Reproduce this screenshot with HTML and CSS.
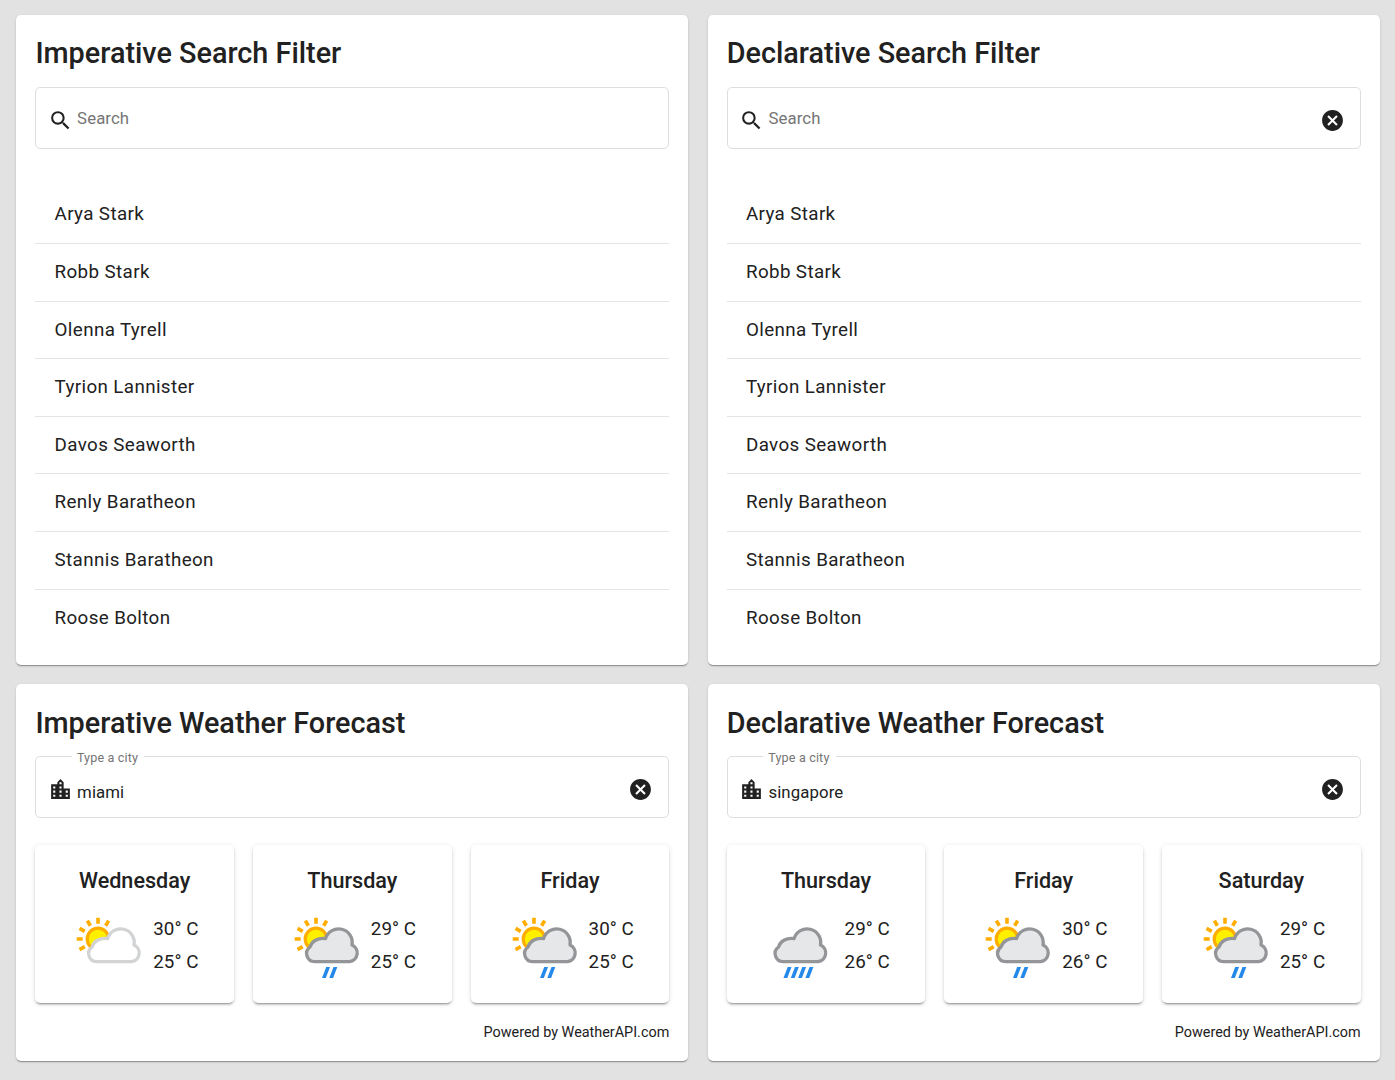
FILE: index.html
```html
<!DOCTYPE html>
<html lang="en">
<head>
<meta charset="utf-8">
<title>Search and Weather</title>
<link rel="stylesheet" href="styles.css">
</head>
<body>
<svg class="sprite" aria-hidden="true">
  <symbol id="search" viewBox="0 0 24 24"><path d="M15.5 14h-.79l-.28-.27A6.47 6.47 0 0 0 16 9.5 6.5 6.5 0 1 0 9.5 16c1.61 0 3.09-.59 4.23-1.57l.27.28v.79l5 4.99L20.49 19l-4.99-5zm-6 0C7.01 14 5 11.99 5 9.5S7.01 5 9.5 5 14 7.01 14 9.5 11.99 14 9.5 14z"/></symbol>
  <symbol id="cancel" viewBox="0 0 24 24"><path d="M12 2C6.47 2 2 6.47 2 12s4.47 10 10 10 10-4.47 10-10S17.53 2 12 2zm5 13.59L15.59 17 12 13.41 8.41 17 7 15.59 10.59 12 7 8.41 8.41 7 12 10.59 15.59 7 17 8.41 13.41 12 17 15.59z"/></symbol>
  <symbol id="city" viewBox="0 0 24 24"><path d="M15 11V5l-3-3-3 3v2H3v14h18V11h-6zm-8 8H5v-2h2v2zm0-4H5v-2h2v2zm0-4H5V9h2v2zm6 8h-2v-2h2v2zm0-4h-2v-2h2v2zm0-4h-2V9h2v2zm0-4h-2V5h2v2zm6 12h-2v-2h2v2zm0-4h-2v-2h2v2z"/></symbol>
  <symbol id="sun" viewBox="0 0 72 72">
    <circle cx="25" cy="30" r="10.8" fill="#fff000" stroke="#ffae00" stroke-width="3.2"/>
    <path d="M25 14.7V8.7M17.35 16.75l-3-5.2M11.75 22.35l-5.2-3M9.7 30h-6M11.75 37.65l-5.2 3M32.65 16.75l3-5.2" fill="none" stroke="#ffae00" stroke-width="3.6"/>
  </symbol>
  <symbol id="cloud" viewBox="0 0 72 72">
    <path d="M23.8 52.6a8 8 0 0 1-4.7-14.6C20.3 32.5 27 28.3 34.6 29.6A13.6 13.6 0 0 1 61 36A8.7 8.7 0 0 1 58.5 52.6Z" stroke-width="3.3" stroke-linejoin="round"/>
  </symbol>
  <symbol id="drop" viewBox="0 0 72 72"><path d="M35.2 58h3.8l-4.2 11H31z" fill="#2489e8"/></symbol>
  <symbol id="partly" viewBox="0 0 72 72"><use href="#sun"/><use href="#cloud" fill="#fff" stroke="#d1d3d4"/></symbol>
  <symbol id="showers" viewBox="0 0 72 72"><use href="#sun"/><use href="#cloud" fill="#e6e7e8" stroke="#939598"/><use href="#drop"/><use href="#drop" x="7.3"/></symbol>
  <symbol id="rain" viewBox="0 0 72 72"><use href="#cloud" x="-5.5" fill="#e6e7e8" stroke="#939598"/><use href="#drop" x="-12.5"/><use href="#drop" x="-5.2"/><use href="#drop" x="2.1"/><use href="#drop" x="9.4"/></symbol>
</svg>
<main class="board">
  <section class="card">
    <h1 class="title">Imperative Search Filter</h1>
    <div class="field"><svg class="icon"><use href="#search"/></svg><input class="input" placeholder="Search" aria-label="Search"></div>
    <ul class="list"><li>Arya Stark</li><li>Robb Stark</li><li>Olenna Tyrell</li><li>Tyrion Lannister</li><li>Davos Seaworth</li><li>Renly Baratheon</li><li>Stannis Baratheon</li><li>Roose Bolton</li></ul>
  </section>
  <section class="card">
    <h1 class="title">Declarative Search Filter</h1>
    <div class="field"><svg class="icon"><use href="#search"/></svg><input class="input" placeholder="Search" aria-label="Search"><svg class="icon"><use href="#cancel"/></svg></div>
    <ul class="list"><li>Arya Stark</li><li>Robb Stark</li><li>Olenna Tyrell</li><li>Tyrion Lannister</li><li>Davos Seaworth</li><li>Renly Baratheon</li><li>Stannis Baratheon</li><li>Roose Bolton</li></ul>
  </section>
  <section class="card">
    <h1 class="title forecast">Imperative Weather Forecast</h1>
    <div class="field"><label class="label" for="city-a">Type a city</label><svg class="icon"><use href="#city"/></svg><input class="input filled" id="city-a" value="miami"><svg class="icon"><use href="#cancel"/></svg></div>
    <div class="days">
      <article class="day"><h2>Wednesday</h2><div class="weather"><svg class="sky"><use href="#partly"/></svg><div class="temps"><span>30° C</span><span>25° C</span></div></div></article>
      <article class="day"><h2>Thursday</h2><div class="weather"><svg class="sky"><use href="#showers"/></svg><div class="temps"><span>29° C</span><span>25° C</span></div></div></article>
      <article class="day"><h2>Friday</h2><div class="weather"><svg class="sky"><use href="#showers"/></svg><div class="temps"><span>30° C</span><span>25° C</span></div></div></article>
    </div>
    <p class="credit">Powered by WeatherAPI.com</p>
  </section>
  <section class="card">
    <h1 class="title forecast">Declarative Weather Forecast</h1>
    <div class="field"><label class="label" for="city-b">Type a city</label><svg class="icon"><use href="#city"/></svg><input class="input filled" id="city-b" value="singapore"><svg class="icon"><use href="#cancel"/></svg></div>
    <div class="days">
      <article class="day"><h2>Thursday</h2><div class="weather"><svg class="sky"><use href="#rain"/></svg><div class="temps"><span>29° C</span><span>26° C</span></div></div></article>
      <article class="day"><h2>Friday</h2><div class="weather"><svg class="sky"><use href="#showers"/></svg><div class="temps"><span>30° C</span><span>26° C</span></div></div></article>
      <article class="day"><h2>Saturday</h2><div class="weather"><svg class="sky"><use href="#showers"/></svg><div class="temps"><span>29° C</span><span>25° C</span></div></div></article>
    </div>
    <p class="credit">Powered by WeatherAPI.com</p>
  </section>
</main>
</body>
</html>
```
FILE: styles.css
```css
* { box-sizing: border-box; margin: 0; padding: 0; }
body {
  background: #e2e2e2;
  color: #212121;
  font-family: Roboto, "Liberation Sans", sans-serif;
}
.sprite { display: none; }
.board {
  display: grid;
  grid-template-columns: 1fr 1fr;
  grid-template-rows: 650px 377px;
  gap: 19px 19.1px;
  padding: 15px 15.2px 19px 16.2px;
}
.card {
  padding: 19px 19.2px;
  background: #fff;
  border-radius: 5px;
  box-shadow: 0 2px 1px -1px rgba(0,0,0,.2), 0 1px 1px rgba(0,0,0,.14), 0 1px 3px rgba(0,0,0,.12);
}
.title {
  height: 53px;
  font-size: 28.8px;
  font-weight: 500;
  line-height: 38px;
}
.forecast { line-height: 40px; }
.field {
  position: relative;
  display: flex;
  align-items: center;
  height: 62px;
  padding: 4px 15px 0 11.7px;
  border: 1px solid #dedede;
  border-radius: 5px;
}
.icon { width: 25px; height: 25px; flex: none; fill: currentColor; }
.input {
  flex: 1;
  min-width: 0;
  height: 30px;
  margin: 0 4px 4px;
  border: 0;
  outline: 0;
  background: none;
  color: #212121;
  font: 400 16.8px Roboto, sans-serif;
  letter-spacing: .1px;
}
.input::placeholder { color: #757575; }
.filled { margin: 6px 4px 0; }
.label {
  position: absolute;
  left: 35.5px;
  top: -8px;
  padding: 0 6px 0 5px;
  background: #fff;
  color: #757575;
  font-size: 12.6px;
  line-height: 18px;
  letter-spacing: .15px;
}
.list {
  padding-top: 37.4px;
  list-style: none;
}
.list li {
  height: 57.6px;
  padding: 0 19.2px;
  border-bottom: 1px solid #e4e4e4;
  font-size: 18.8px;
  line-height: 57px;
  letter-spacing: .38px;
}
.list li:first-child { line-height: 56px; }
.list li:last-child { border-bottom: 0; }
.days {
  display: grid;
  grid-template-columns: repeat(3, 1fr);
  gap: 19.2px;
  margin-top: 27px;
}
.day {
  height: 158px;
  padding-top: 20px;
  border-radius: 5px;
  text-align: center;
  box-shadow: 0 3px 1px -2px rgba(0,0,0,.2), 0 2px 2px rgba(0,0,0,.14), 0 1px 5px rgba(0,0,0,.12);
}
.day h2 { font-size: 21.6px; font-weight: 500; line-height: 32px; }
.weather { display: flex; gap: 8px; padding: 12px 0 0 37.8px; }
.sky { width: 72px; height: 72px; }
.temps {
  display: flex;
  flex-direction: column;
  padding-top: 4px;
  font-size: 18.8px;
  line-height: 33px;
  letter-spacing: .05px;
}
.credit {
  margin-top: 19px;
  text-align: right;
  font-size: 14.4px;
  line-height: 22px;
}
```
